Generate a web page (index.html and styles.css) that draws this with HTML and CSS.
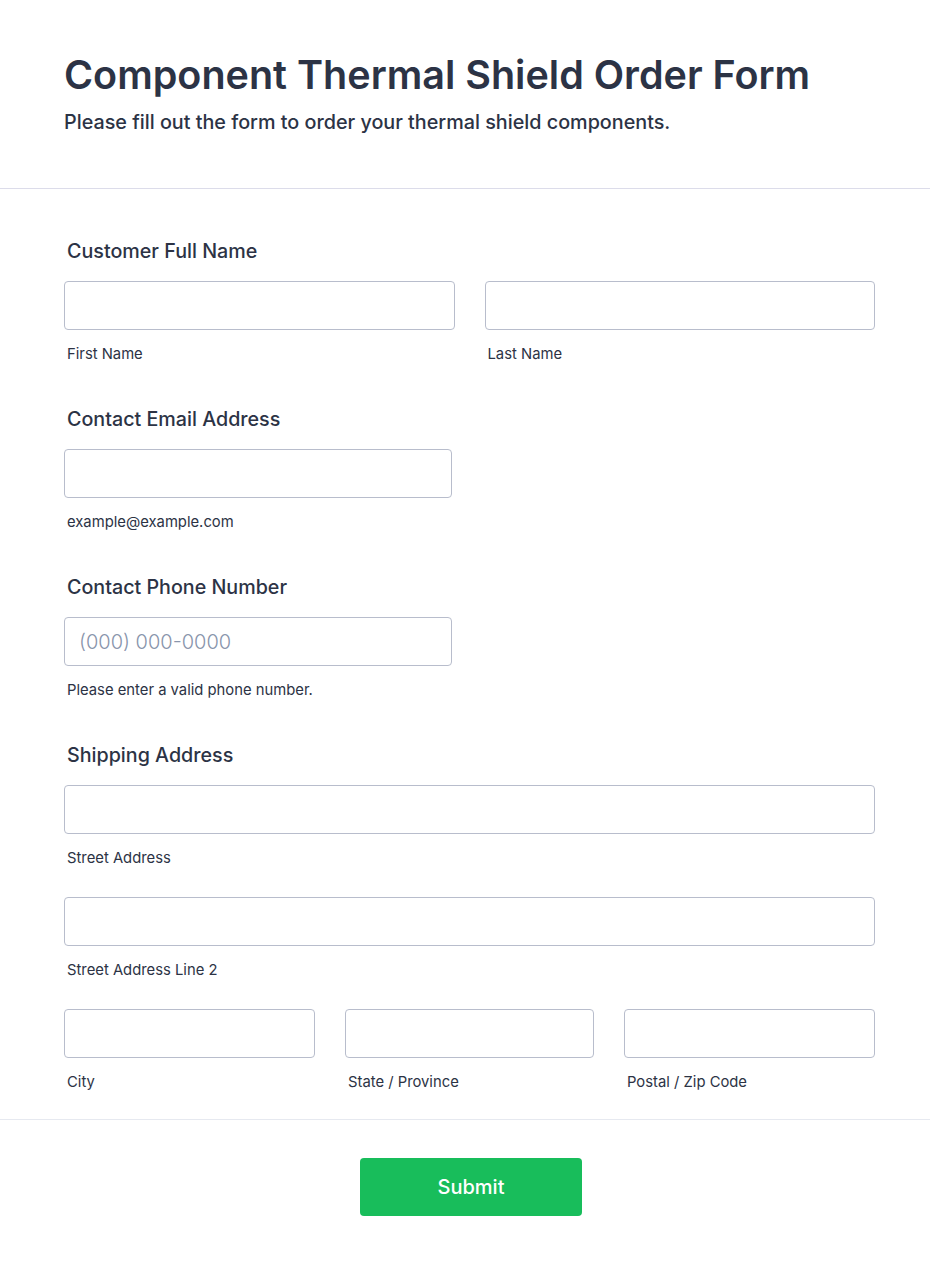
FILE: index.html
```html
<!DOCTYPE html>
<html lang="en">
<head>
<meta charset="utf-8">
<title>Component Thermal Shield Order Form</title>
<link rel="stylesheet" href="styles.css">
</head>
<body>
<header class="form-header">
  <h1 class="form-title">Component Thermal Shield Order Form</h1>
  <p class="form-subtitle">Please fill out the form to order your thermal shield components.</p>
</header>
<main class="form-body">
  <section class="field">
    <label class="field-label">Customer Full Name</label>
    <div class="row two">
      <div class="cell"><input class="input" type="text"><span class="sublabel">First Name</span></div>
      <div class="cell"><input class="input" type="text"><span class="sublabel">Last Name</span></div>
    </div>
  </section>
  <section class="field">
    <label class="field-label">Contact Email Address</label>
    <div class="cell half"><input class="input" type="email"><span class="sublabel">example@example.com</span></div>
  </section>
  <section class="field">
    <label class="field-label">Contact Phone Number</label>
    <div class="cell half"><input class="input" type="tel" placeholder="(000) 000-0000"><span class="sublabel">Please enter a valid phone number.</span></div>
  </section>
  <section class="field last">
    <label class="field-label">Shipping Address</label>
    <div class="cell"><input class="input" type="text"><span class="sublabel">Street Address</span></div>
    <div class="cell"><input class="input" type="text"><span class="sublabel">Street Address Line 2</span></div>
    <div class="row three">
      <div class="cell"><input class="input" type="text"><span class="sublabel">City</span></div>
      <div class="cell"><input class="input" type="text"><span class="sublabel">State / Province</span></div>
      <div class="cell"><input class="input" type="text"><span class="sublabel">Postal / Zip Code</span></div>
    </div>
  </section>
</main>
<footer class="form-footer">
  <button class="submit" type="button">Submit</button>
</footer>
</body>
</html>
```

FILE: styles.css
```css
* { box-sizing: border-box; }
html, body { margin: 0; padding: 0; background: #fff; }
body {
  font-family: Inter, "Noto Sans", "Liberation Sans", sans-serif;
  color: #2c3345;
  width: 930px;
}
.form-header {
  padding: 50px 64px 0;
  height: 189px;
  border-bottom: 1px solid #dcdcea;
}
.form-title {
  margin: 0;
  font-size: 39.5px;
  line-height: 50px;
  font-weight: 600;
  color: #2c3345;
}
.form-subtitle {
  margin: 8px 0 0;
  font-size: 19.75px;
  line-height: 28px;
  font-weight: 500;
  color: #2c3345;
}
.form-body {
  padding: 49px 55px 26px 64px;
  border-bottom: 1px solid #e6e9f0;
}
.field { margin-bottom: 41px; }
.field.last { margin-bottom: 0; }
.field-label {
  display: block;
  margin: 0 0 17px 3px;
  font-size: 19.7px;
  line-height: 26px;
  font-weight: 500;
  color: #2c3345;
}
.row { display: grid; gap: 30px; }
.row.two { grid-template-columns: 1fr 1fr; }
.row.three { grid-template-columns: 251px 249px 1fr; }
.cell { display: flex; flex-direction: column; }
.field.last > .cell { margin-bottom: 28px; }
.cell.half { width: 388px; }
.input {
  display: block;
  width: 100%;
  height: 49px;
  border: 1px solid #b8bdcc;
  border-radius: 4px;
  padding: 0 14px;
  font-family: inherit;
  font-size: 20px;
  color: #2c3345;
  background: #fff;
  outline: none;
}
.input::placeholder { color: #8894ab; font-weight: 300; }
.sublabel {
  display: block;
  margin: 14px 0 0 3px;
  font-size: 14.8px;
  line-height: 21px;
  color: #2c3345;
}
.form-footer {
  display: flex;
  justify-content: center;
  padding: 38px 55px 50px 67px;
}
.submit {
  width: 222px;
  height: 58px;
  border: none;
  border-radius: 4px;
  background: #18bd5b;
  color: #fff;
  font-family: inherit;
  font-size: 20px;
  font-weight: 500;
  cursor: pointer;
}
```
